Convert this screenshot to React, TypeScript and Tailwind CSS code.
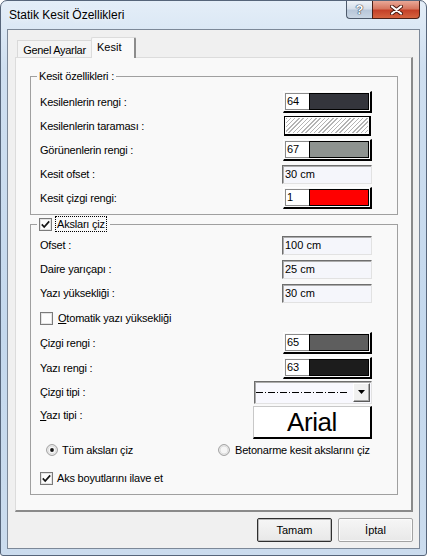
import React from 'react';

const font = "font-['Liberation_Sans',Arial,sans-serif]";
const label = 'text-[11px] leading-[14px] tracking-[-0.2px] text-black whitespace-nowrap';

function CheckBox({ checked }: { checked?: boolean }) {
  return (
    <svg width="13" height="13" viewBox="0 0 13 13" className="shrink-0">
      <rect x="0.5" y="0.5" width="12" height="12" fill="#fdfdfd" stroke="#7b7b7b" />
      <rect x="1.5" y="1.5" width="10" height="10" fill="none" stroke="#e4e4e4" />
      {checked && <path d="M2.8 6.4 L5.2 9 L10.2 3.4" fill="none" stroke="#151515" strokeWidth="1.7" />}
    </svg>
  );
}

function Radio({ checked }: { checked?: boolean }) {
  return (
    <svg width="12" height="12" viewBox="0 0 12 12" className="shrink-0">
      <circle cx="6" cy="6" r="5.4" fill="#f6f6f6" stroke="#9a9a9a" />
      <circle cx="6" cy="6" r="4" fill="none" stroke="#dedede" />
      {checked && <circle cx="6" cy="6" r="1.9" fill="#151515" />}
    </svg>
  );
}

function ColorBox({ num, swatch }: { num: string; swatch: string }) {
  return (
    <div className="w-[89px] h-[22px] flex p-px border-l border-t border-l-white border-t-white border-r-2 border-b-2 border-r-black border-b-black">
      <div className="w-[24px] h-full bg-white border border-[#8a8a8a] border-r-0 text-[11px] leading-[15px] pl-px text-black">
        {num}
      </div>
      <div className={`flex-1 h-full border border-black ${swatch}`} />
    </div>
  );
}

function TextBox({ value }: { value: string }) {
  return (
    <div className="w-[90px] h-[19px] bg-[#f5f6fb] border border-t-[#6e6e6e] border-l-[#6e6e6e] border-r-[#e2e2e2] border-b-[#e2e2e2] shadow-[inset_1px_1px_0_#acacac] text-[11px] leading-[17px] pl-[2px] text-black">
      {value}
    </div>
  );
}

function Row({ text, children }: { text: string; children: React.ReactNode }) {
  return (
    <div className="flex items-center justify-between h-[24px] pl-[9px] pr-[25px]">
      <span className={label}>{text}</span>
      {children}
    </div>
  );
}

export default function App() {
  return (
    <div className={`${font} w-[427px] h-[556px] flex flex-col rounded-t-[7px] rounded-b-[3px] border border-[#56657a] bg-[linear-gradient(180deg,#e4eef8_0%,#cfdff0_12%,#c4d8ed_60%,#cbdcee_100%)]`}>
      {/* title bar */}
      <div className="h-[28px] flex justify-between">
        <span className="self-center pl-[8px] text-[12px] leading-[14px] text-black [text-shadow:0_0_6px_#ffffff]">
          Statik Kesit Özellikleri
        </span>
        <div className="flex self-start mr-[6px]">
          <div className="w-[26px] h-[18px] flex items-center justify-center rounded-bl-[4px] border border-t-0 border-r-0 border-[#4d5a6b] bg-[linear-gradient(180deg,#eef2f7_0%,#d6dfea_45%,#b8c7d9_55%,#c9d6e4_100%)]">
            <span className="text-[13px] leading-[14px] font-bold text-white [text-shadow:0_0_1px_#2c3949,0_0_1px_#2c3949,0_0_1px_#2c3949]">?</span>
          </div>
          <div className="w-[48px] h-[18px] flex items-center justify-center rounded-br-[4px] border border-t-0 border-[#4a2017] bg-[linear-gradient(180deg,#e9a897_0%,#d67760_45%,#c44128_55%,#d5633f_100%)]">
            <svg width="13" height="10" viewBox="0 0 13 10">
              <path d="M2 1.5 L11 8.5 M11 1.5 L2 8.5" stroke="#4a1a10" strokeWidth="4" strokeLinecap="round" />
              <path d="M2 1.5 L11 8.5 M11 1.5 L2 8.5" stroke="#ffffff" strokeWidth="2.2" strokeLinecap="round" />
            </svg>
          </div>
        </div>
      </div>

      {/* client area */}
      <div className="mx-[6px] mb-[6px] h-[520px] border border-[#7c8898] bg-[#f0f0f0] pt-[7px] pl-[7px] pr-[6px] flex flex-col">
        {/* tabs */}
        <div className="h-[20px] flex items-end pl-[2px]">
          <div className="w-[74px] h-[17px] bg-[#f4f4f4] border-l border-t border-[#d9d9d9] text-[11px] leading-[16px] tracking-[-0.3px] text-center text-black pt-px">
            Genel Ayarlar
          </div>
          <div className="relative z-10 w-[45px] h-[21px] -mb-px bg-[#f9f9f9] border-l border-t border-[#dcdcdc] border-r-2 border-r-[#8c8c8c] rounded-t-[2px] text-[11px] leading-[18px] pl-[5px] text-black">
            Kesit
          </div>
        </div>

        {/* tab panel */}
        <div className="h-[455px] bg-[#f9f9f9] border-l border-t border-[#dcdcdc] border-r-2 border-b-2 border-r-[#8a8a8a] border-b-[#8a8a8a] pl-[14px] pr-[13px]">
          {/* group 1 */}
          <div className="relative mt-[18px] h-[139px] border border-[#a0a0a0] pt-[13px]">
            <span className={`absolute -top-[8px] left-[6px] bg-[#f9f9f9] px-[2px] ${label}`}>Kesit özellikleri :</span>
            <Row text="Kesilenlerin rengi :">
              <ColorBox num="64" swatch="bg-[#34353c]" />
            </Row>
            <Row text="Kesilenlerin taraması :">
              <div className="w-[87px] h-[20px] mr-px border-l border-t border-r-2 border-b-2 border-black bg-white p-px">
                <div className="w-full h-full bg-[repeating-linear-gradient(135deg,#b4b4b4_0px,#b4b4b4_1px,#ffffff_1px,#ffffff_3px)]" />
              </div>
            </Row>
            <Row text="Görünenlerin rengi :">
              <ColorBox num="67" swatch="bg-[#8e9390]" />
            </Row>
            <Row text="Kesit ofset :">
              <TextBox value="30 cm" />
            </Row>
            <Row text="Kesit çizgi rengi:">
              <ColorBox num="1" swatch="bg-[#ff0000]" />
            </Row>
          </div>

          {/* group 2 */}
          <div className="relative mt-[9px] h-[271px] border border-[#a0a0a0] pt-[8px]">
            <div className="absolute -top-[8px] left-[6px] bg-[#f9f9f9] pl-[2px] pr-[4px] h-[14px] flex items-center gap-[4px]">
              <CheckBox checked />
              <span className={`${label} outline-1 outline-dotted outline-black px-px`}>Aksları çiz</span>
            </div>
            <Row text="Ofset :">
              <TextBox value="100 cm" />
            </Row>
            <Row text="Daire yarıçapı :">
              <TextBox value="25 cm" />
            </Row>
            <Row text="Yazı yüksekliği :">
              <TextBox value="30 cm" />
            </Row>
            <div className="h-[26px] flex items-center gap-[5px] pl-[9px]">
              <CheckBox />
              <span className={label}>
                <span className="underline">O</span>tomatik yazı yüksekliği
              </span>
            </div>
            <Row text="Çizgi rengi :">
              <ColorBox num="65" swatch="bg-[#5e5e5e]" />
            </Row>
            <div className="flex items-center justify-between h-[25px] pl-[9px] pr-[25px]">
              <span className={label}>Yazı rengi :</span>
              <ColorBox num="63" swatch="bg-[#1c1c1c]" />
            </div>
            <Row text="Çizgi tipi :">
              <div className="w-[118px] h-[23px] flex items-center bg-[#f8f8fe] border border-t-[#6e6e6e] border-l-[#6e6e6e] border-r-[#e2e2e2] border-b-[#e2e2e2] shadow-[inset_1px_1px_0_#acacac]">
                <svg width="96" height="3" viewBox="0 0 96 3" className="ml-[1px]">
                  <line x1="0" y1="1.5" x2="92" y2="1.5" stroke="#000" strokeWidth="1" strokeDasharray="7 2 1 2" />
                </svg>
                <div className="ml-auto mr-px w-[17px] h-[19px] flex items-center justify-center bg-[#f0f0f0] border border-t-white border-l-white border-r-[#5a5a5a] border-b-[#5a5a5a] shadow-[inset_-1px_-1px_0_#a8a8a8]">
                  <svg width="7" height="4" viewBox="0 0 7 4">
                    <path d="M0 0 H7 L3.5 4 Z" fill="#000" />
                  </svg>
                </div>
              </div>
            </Row>
            <div className="flex items-start justify-between h-[36px] pl-[9px] pr-[25px]">
              <span className={`${label} mt-[4px]`}>
                <span className="underline">Y</span>azı tipi :
              </span>
              <div className="mt-[2px] w-[119px] h-[33px] bg-white border-l border-t border-[#c8c8c8] border-r-2 border-b-2 border-r-black border-b-black flex items-center justify-center text-[26px] leading-[28px] tracking-[-0.4px] text-black">
                Arial
              </div>
            </div>
            <div className="h-[20px] flex items-center pl-[15px]">
              <div className="w-[172px] flex items-center gap-[4px]">
                <Radio checked />
                <span className={label}>Tüm aksları çiz</span>
              </div>
              <div className="flex items-center gap-[5px]">
                <Radio />
                <span className={label}>Betonarme kesit akslarını çiz</span>
              </div>
            </div>
            <div className="mt-[8px] h-[20px] flex items-center gap-[4px] pl-[9px]">
              <CheckBox checked />
              <span className={label}>Aks boyutlarını ilave et</span>
            </div>
          </div>
        </div>

        {/* buttons */}
        <div className="mt-[6px] h-[24px] flex justify-end gap-[6px]">
          <button className="w-[75px] h-[24px] rounded-[2px] border border-[#2f2f2f] shadow-[inset_0_0_0_1px_#b8b8b8] bg-[linear-gradient(180deg,#f6f6f6,#e8e8e8)] text-[11px] leading-[14px] text-black">
            Tamam
          </button>
          <button className="w-[75px] h-[24px] rounded-[2px] border border-[#a3a3a3] shadow-[inset_0_0_0_1px_#fbfbfb] bg-[linear-gradient(180deg,#f6f6f6,#e8e8e8)] text-[11px] leading-[14px] text-black">
            İptal
          </button>
        </div>
      </div>
    </div>
  );
}
